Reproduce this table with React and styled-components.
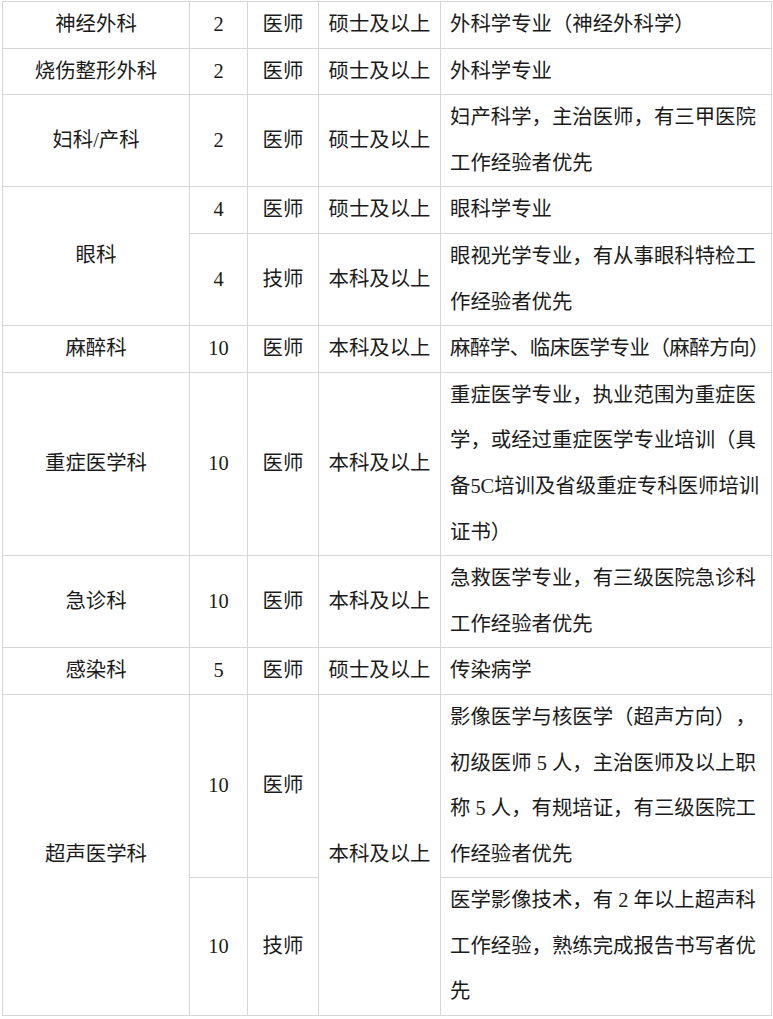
import React from 'react';
import styled, { createGlobalStyle } from 'styled-components';

const GlobalStyle = createGlobalStyle`
  html, body {
    margin: 0;
    padding: 0;
    background: #ffffff;
  }
  body {
    font-family: "Liberation Serif", "Noto Sans CJK SC", serif;
    color: #1a1a1a;
    text-spacing-trim: space-all;
  }
`;

const Page = styled.div`
  padding: 1px 0 0 2px;
`;

const Table = styled.table`
  border-collapse: collapse;
  table-layout: fixed;
  width: 769px;
  font-size: 20.4px;
  line-height: 45.6px;
`;

const Col = styled.col`
  width: ${props => props.$w}px;
`;

const Cell = styled.td`
  border: 1px solid #d6d6d6;
  padding: ${props => (props.$left ? '0 0 0 9px' : '0')};
  text-align: ${props => (props.$left ? 'left' : 'center')};
  vertical-align: middle;
  white-space: nowrap;
`;

const Line = styled.span`
  display: block;
  letter-spacing: ${props => (props.$tight ? '-0.45px' : 'normal')};
`;

const Desc = ({ lines, tight }) => (
  <Cell $left>
    {lines.map((l, i) => (
      <Line key={i} $tight={tight}>
        {l}
      </Line>
    ))}
  </Cell>
);

const App = () => (
  <>
    <GlobalStyle />
    <Page lang="zh-CN">
      <Table>
        <colgroup>
          <Col $w={187} />
          <Col $w={58} />
          <Col $w={71} />
          <Col $w={122} />
          <Col $w={331} />
        </colgroup>
        <tbody>
          <tr>
            <Cell>神经外科</Cell>
            <Cell>2</Cell>
            <Cell>医师</Cell>
            <Cell>硕士及以上</Cell>
            <Desc lines={['外科学专业（神经外科学）']} />
          </tr>
          <tr>
            <Cell>烧伤整形外科</Cell>
            <Cell>2</Cell>
            <Cell>医师</Cell>
            <Cell>硕士及以上</Cell>
            <Desc lines={['外科学专业']} />
          </tr>
          <tr>
            <Cell>妇科/产科</Cell>
            <Cell>2</Cell>
            <Cell>医师</Cell>
            <Cell>硕士及以上</Cell>
            <Desc lines={['妇产科学，主治医师，有三甲医院', '工作经验者优先']} />
          </tr>
          <tr>
            <Cell rowSpan={2}>眼科</Cell>
            <Cell>4</Cell>
            <Cell>医师</Cell>
            <Cell>硕士及以上</Cell>
            <Desc lines={['眼科学专业']} />
          </tr>
          <tr>
            <Cell>4</Cell>
            <Cell>技师</Cell>
            <Cell>本科及以上</Cell>
            <Desc lines={['眼视光学专业，有从事眼科特检工', '作经验者优先']} />
          </tr>
          <tr>
            <Cell>麻醉科</Cell>
            <Cell>10</Cell>
            <Cell>医师</Cell>
            <Cell>本科及以上</Cell>
            <Desc tight lines={['麻醉学、临床医学专业（麻醉方向）']} />
          </tr>
          <tr>
            <Cell>重症医学科</Cell>
            <Cell>10</Cell>
            <Cell>医师</Cell>
            <Cell>本科及以上</Cell>
            <Desc
              lines={[
                '重症医学专业，执业范围为重症医',
                '学，或经过重症医学专业培训（具',
                '备5C培训及省级重症专科医师培训',
                '证书）',
              ]}
            />
          </tr>
          <tr>
            <Cell>急诊科</Cell>
            <Cell>10</Cell>
            <Cell>医师</Cell>
            <Cell>本科及以上</Cell>
            <Desc lines={['急救医学专业，有三级医院急诊科', '工作经验者优先']} />
          </tr>
          <tr>
            <Cell>感染科</Cell>
            <Cell>5</Cell>
            <Cell>医师</Cell>
            <Cell>硕士及以上</Cell>
            <Desc lines={['传染病学']} />
          </tr>
          <tr>
            <Cell rowSpan={2}>超声医学科</Cell>
            <Cell>10</Cell>
            <Cell>医师</Cell>
            <Cell rowSpan={2}>本科及以上</Cell>
            <Desc
              lines={[
                '影像医学与核医学（超声方向），',
                '初级医师 5 人，主治医师及以上职',
                '称 5 人，有规培证，有三级医院工',
                '作经验者优先',
              ]}
            />
          </tr>
          <tr>
            <Cell>10</Cell>
            <Cell>技师</Cell>
            <Desc
              lines={[
                '医学影像技术，有 2 年以上超声科',
                '工作经验，熟练完成报告书写者优',
                '先',
              ]}
            />
          </tr>
        </tbody>
      </Table>
    </Page>
  </>
);

export default App;
